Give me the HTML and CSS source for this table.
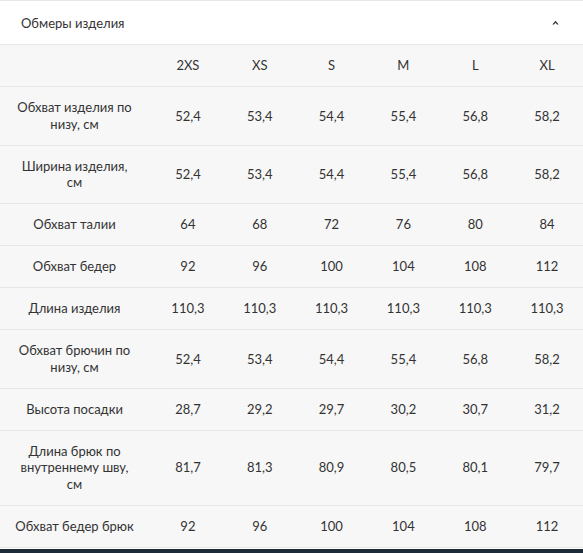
FILE: index.html
```html
<!DOCTYPE html>
<html lang="ru">
<head>
<meta charset="utf-8">
<link rel="stylesheet" href="styles.css">
</head>
<body>
<div class="panel">
  <div class="head">
    <span class="title">Обмеры изделия</span>
    <svg class="caret" width="7" height="5" viewBox="0 0 7 5"><path d="M0.3 4.6 L3.5 0.8 L6.7 4.6 L5 4.6 L3.5 2.8 L2 4.6 Z" fill="#333"/></svg>
  </div>
  <table class="sizes">
    <thead>
      <tr><th class="label"></th><th>2XS</th><th>XS</th><th>S</th><th>M</th><th>L</th><th>XL</th></tr>
    </thead>
    <tbody>
      <tr><td class="label">Обхват изделия по низу, см</td><td>52,4</td><td>53,4</td><td>54,4</td><td>55,4</td><td>56,8</td><td>58,2</td></tr>
      <tr><td class="label">Ширина изделия, см</td><td>52,4</td><td>53,4</td><td>54,4</td><td>55,4</td><td>56,8</td><td>58,2</td></tr>
      <tr><td class="label">Обхват талии</td><td>64</td><td>68</td><td>72</td><td>76</td><td>80</td><td>84</td></tr>
      <tr><td class="label">Обхват бедер</td><td>92</td><td>96</td><td>100</td><td>104</td><td>108</td><td>112</td></tr>
      <tr><td class="label">Длина изделия</td><td>110,3</td><td>110,3</td><td>110,3</td><td>110,3</td><td>110,3</td><td>110,3</td></tr>
      <tr><td class="label">Обхват брючин по низу, см</td><td>52,4</td><td>53,4</td><td>54,4</td><td>55,4</td><td>56,8</td><td>58,2</td></tr>
      <tr><td class="label">Высота посадки</td><td>28,7</td><td>29,2</td><td>29,7</td><td>30,2</td><td>30,7</td><td>31,2</td></tr>
      <tr><td class="label">Длина брюк по внутреннему шву, см</td><td>81,7</td><td>81,3</td><td>80,9</td><td>80,5</td><td>80,1</td><td>79,7</td></tr>
      <tr><td class="label">Обхват бедер брюк</td><td>92</td><td>96</td><td>100</td><td>104</td><td>108</td><td>112</td></tr>
    </tbody>
  </table>
</div>
<div class="bar"></div>
</body>
</html>
```
FILE: styles.css
```css
html, body {
  margin: 0;
  padding: 0;
  background: #ffffff;
}
body {
  font-family: Lato, "Noto Sans", sans-serif;
  font-size: 13px;
  color: #333333;
}
.panel {
  border-top: 1px solid #e8e8e8;
}
.head {
  height: 43px;
  display: flex;
  align-items: center;
  justify-content: space-between;
  padding: 0 24px 0 21px;
  border-bottom: 1px solid #e8e8e8;
  background: #fff;
}
.title {
  font-size: 13px;
  color: #333;
}
.caret {
  display: block;
  margin-top: -1px;
}
.sizes {
  width: 100%;
  border-collapse: collapse;
  table-layout: fixed;
  background: #f7f7f7;
}
.sizes th, .sizes td {
  box-sizing: border-box;
  font-weight: normal;
  text-align: center;
  padding: 12.25px 0;
  line-height: 16.5px;
  border-bottom: 1px solid #e6e6e6;
}
.sizes .label {
  width: 152px;
  padding: 12.25px 17px 12.25px 14px;
}
.bar {
  height: 5px;
  margin-top: 1px;
  background: #1f2a38;
}
```
